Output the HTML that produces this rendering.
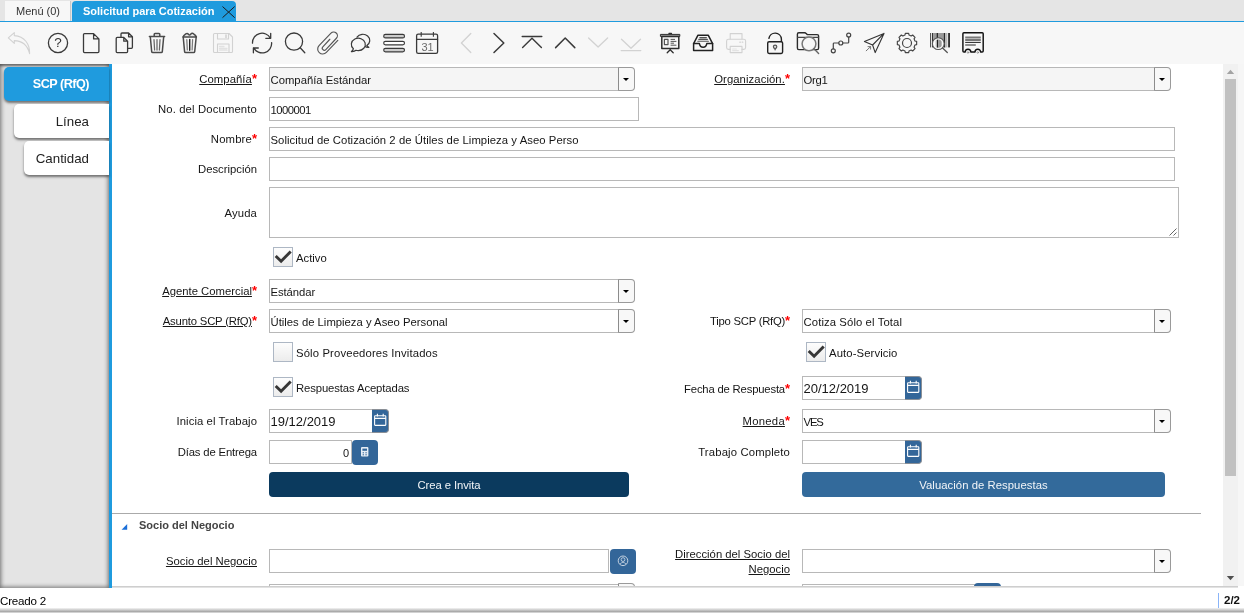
<!DOCTYPE html>
<html lang="es">
<head>
<meta charset="utf-8">
<title>Solicitud para Cotización</title>
<style>
*{box-sizing:border-box;margin:0;padding:0}
html,body{width:1244px;height:613px;overflow:hidden;background:#fff}
body{position:relative;will-change:transform;font-family:"Liberation Sans",sans-serif;font-size:11.3px;color:#161616}
.abs,.lbl,.fld,.txt,.cb,.cbl,.dd,.btn,.ib{position:absolute}
#tabbar{position:absolute;left:0;top:0;width:1244px;height:21px;background:#e5e5e5}
#tabline{position:absolute;left:0;top:21px;width:1244px;height:1px;background:#1f9bde}
#t1{position:absolute;left:5px;top:1px;width:66px;height:20px;background:#f7f7f7;border-right:1px solid #c9c9c9;font-size:11px;line-height:20px;color:#333;padding-left:11px;white-space:nowrap}
#t2{position:absolute;left:72px;top:1px;width:164px;height:21px;background:#1f9bde;border-radius:4px 4px 0 0;font-size:11px;font-weight:bold;line-height:20px;color:#fff;padding-left:11px;white-space:nowrap}
#toolbar{position:absolute;left:0;top:22px;width:1244px;height:42px;background:#f7f7f7}
#side{position:absolute;left:0;top:64px;width:109px;height:524px;background:#e4e4e4;box-shadow:inset 0 0 4px 1px rgba(0,0,0,.5),inset 0 3px 2px -1px rgba(0,0,0,.3)}
#vline{position:absolute;left:109px;top:64px;width:3px;height:524px;background:#1f9bde}
.st{position:absolute;height:34px;border-radius:5px 0 0 5px;font-size:13.3px;line-height:35px;text-align:right;padding-right:20px;white-space:nowrap;box-shadow:0 2px 2.5px rgba(0,0,0,.5)}
.lbl{left:112px;width:145px;height:24px;line-height:24px;text-align:right;white-space:nowrap}
.lbl.r{left:640px;width:150px}
.lbl u{text-decoration:underline;text-underline-offset:1px}
.req{color:#f00;font-weight:bold;font-size:13px;line-height:1px}
.fld{height:24px;border:1px solid #b8b8b8;background:#fff;line-height:22px;padding:1px 0 0 0.5px;white-space:nowrap;overflow:hidden}
.fld.dt{font-size:13px;padding-top:1px}
.fld.ro{background:#f5f5f5}
.dd{width:17px;height:24px;border:1px solid #9a9a9a;border-left-color:#8c8c8c;background:#f8f8f8;border-radius:0 4px 4px 0}
.dd:after{content:"";position:absolute;left:4px;top:10px;border:3.2px solid transparent;border-top:3.6px solid #000;border-bottom:0}
.cb{width:20px;height:20px;border:1px solid #adb7c4;background:linear-gradient(#fdfdfd,#ececec)}
.cbl{height:20px;line-height:20px;white-space:nowrap}
.ib{background:#336699;border-radius:0 3px 3px 0}
.ib.d{border:1px solid #8a8f96;border-left:0;border-radius:0 4px 4px 0}
.btn{height:25px;border-radius:4px;color:#f2f5f8;text-align:center;line-height:27px;white-space:nowrap}
#status{position:absolute;left:0;top:588px;width:1244px;height:25px;background:#fff}
</style>
</head>
<body>
<div id="tabbar"></div>
<div id="t1">Menú (0)</div>
<div id="t2">Solicitud para Cotización</div>
<div id="tabline"></div>
<div id="toolbar"></div>
<svg class="abs" style="left:0;top:0" width="1244" height="64" viewBox="0 0 1244 64" fill="none" stroke="#3a3a3a" stroke-width="1.3" stroke-linecap="round" stroke-linejoin="round">
<path d="M222.8 6.8 L234.4 17.4 M234.4 6.8 L222.8 17.4" stroke="#1c1c1c" stroke-width="1"/>
<path d="M14.3 32.6 L8.3 37.9 L14.3 43.4 L14.3 40.6 C21.5 40.8 27.5 45 29.6 53.6 C29.9 44 24.5 36.2 14.3 35.6 Z" stroke="#d2d2d2" stroke-width="1.1"/>
<circle cx="58" cy="43" r="9.6"/>
<path d="M84.5 33.6 H93.6 L98.9 38.9 V51.5 Q98.9 52.6 97.8 52.6 H84.5 Q83.5 52.6 83.5 51.5 V34.6 Q83.5 33.6 84.5 33.6 Z M93.6 33.6 V38.9 H98.9"/>
<path d="M121 36.8 V34 Q121 33 122 33 H128.6 L132.4 36.8 V47.3 Q132.4 48.3 131.4 48.3 H128.4 M128.6 33 V36.8 H132.4"/>
<path d="M117.2 37.4 H123.8 L127.6 41.2 V51.6 Q127.6 52.6 126.6 52.6 H117.2 Q116.2 52.6 116.2 51.6 V38.4 Q116.2 37.4 117.2 37.4 Z M123.8 37.4 V41.2 H127.6" fill="#f7f7f7"/>
<g stroke="#4a4a4a" stroke-width="1.5"><path d="M149.4 36.4 H164.6 M154.2 36.2 V34.4 Q154.2 33.6 155 33.6 H159 Q159.8 33.6 159.8 34.4 V36.2"/><path d="M150.3 36.8 L151.7 51.6 Q151.8 52.6 152.8 52.6 H161.2 Q162.2 52.6 162.3 51.6 L163.7 36.8"/><path d="M154 39.6 L154.6 50 M157 39.6 V50 M160 39.6 L159.4 50" stroke="#666" stroke-width="1.25"/></g>
<g stroke="#4a4a4a" stroke-width="1.5"><path d="M183.2 37 L184.6 51.6 Q184.7 52.6 185.7 52.6 H193.6 Q194.6 52.6 194.7 51.6 L196.2 37"/><path d="M183 37 Q183.2 35.6 185.8 33.8 Q187.4 32.8 188.6 34.4 Q189.6 35.6 190.6 34.2 Q192.2 32.6 193.6 33.8 Q196 35.4 196.4 37 Z" fill="#e6e6e6"/><path d="M186.8 39.6 L187.3 50 M192.6 39.6 L192.1 50" stroke="#777" stroke-width="1.2"/><path d="M189.7 39.4 V50.2" stroke="#222" stroke-width="1.4"/></g>
<g stroke="#d2d2d2" stroke-width="1.1"><path d="M214.5 33.5 H229 L232.5 37 V51.5 Q232.5 52.5 231.5 52.5 H214.5 Q213.5 52.5 213.5 51.5 V34.5 Q213.5 33.5 214.5 33.5 Z"/><path d="M217.5 33.5 V39 H228.5 V33.5"/><path d="M217.5 52.5 V44 H229 V52.5"/><path d="M226 35 V37.6" stroke-width="1.6"/><path d="M219.5 46.5 H224 M219.5 48.5 H227 M219.5 50.2 H227" stroke="#e2e2e2" stroke-width="1.3"/></g>
<path d="M252.5 43.2 A9.5 9.5 0 0 1 270.4 38.3 M270.7 33.3 V38.3 H265.8"/>
<path d="M271.6 42.6 A9.5 9.5 0 0 1 253.7 47.8 M253.4 52.8 V48 H258.3"/>
<circle cx="294" cy="41.6" r="8.6"/><path d="M300.2 47.8 L304.8 52.8"/>
<g transform="translate(328 43) rotate(43)" stroke="#555" stroke-width="1.15"><path d="M5.4 -8.6 L5.2 8 A5 5 0 0 1 -4.8 8 L-4.5 -9.2 A3.7 3.7 0 0 1 2.9 -9.2 L2.9 6.3 A2.05 2.05 0 0 1 -1.2 6.3 L-1.2 -4"/></g>
<path d="M357 37.2 A6.9 6.1 0 1 1 366.8 45.4 Q367.6 46.8 368.8 47.4 Q366.4 47.6 364.6 46.2" stroke-width="1.2"/>
<path d="M358.2 50.6 A7 6.2 0 1 0 353.4 48.8 Q352.8 50.6 351.4 51.6 Q354.4 51.8 356 50.3 Q357 50.6 358.2 50.6 Z" fill="#f7f7f7" stroke-width="1.2"/>
<g stroke-width="1.15"><rect x="383.7" y="34.4" width="20.8" height="3.5" rx="1.75" fill="#ccc"/><rect x="383.7" y="41.3" width="20.8" height="3.5" rx="1.75" fill="#fff"/><rect x="383.7" y="48.3" width="20.8" height="3.5" rx="1.75" fill="#ccc"/></g>
<rect x="416.6" y="34.2" width="21" height="19.2" rx="1.6"/><path d="M416.6 39.3 H437.6" stroke-width="1.2"/><path d="M421.2 32 V36.8 M433.4 32 V36.8" stroke-width="1.1" stroke-linecap="butt"/>
<path d="M470.8 33.5 L461.4 43 L470.8 52.5" stroke="#d2d2d2"/>
<path d="M494 33.5 L503.8 43 L494 52.5" stroke-width="1.5"/>
<path d="M522.2 36.5 H541.8 M522.6 47.6 L532 38.2 L541.4 47.6" stroke-width="1.4"/>
<path d="M555.6 47.6 L565.2 38 L574.8 47.6" stroke-width="1.5"/>
<path d="M588.6 38 L598.1 47 L607.6 38" stroke="#d2d2d2"/>
<path d="M621.5 39.3 L631 48.3 L640.5 39.3 M621.2 50.6 H640.8" stroke="#d2d2d2"/>
<g stroke="#2e2e2e"><rect x="660.8" y="34.4" width="19" height="2" fill="#aaa" stroke-width="1"/><path d="M669 33.4 H671.4" stroke-width="1.4"/><rect x="661.8" y="36.6" width="17" height="11.8" stroke-width="1.5"/><rect x="664.4" y="39.4" width="3.6" height="5.2" stroke="#555" stroke-width="1.2"/><path d="M671 39.4 H674.6 M671 41.4 H676 M671 43.2 H673.6 M671 45.2 H676" stroke="#555" stroke-width="1"/><path d="M670.2 48.6 V50 M670.2 49.8 L667.2 52.8 M670.2 49.8 L673.2 52.8" stroke-width="1.3"/></g>
<g stroke="#222" stroke-width="1.5"><path d="M693.6 43.6 L698 35.2 H708.2 L712.6 43.6"/><path d="M693.6 43.6 H699.4 Q700 47.2 703.1 47.2 Q706.2 47.2 706.8 43.6 H712.6 V50.4 H693.6 Z"/><path d="M699.8 37.6 H706.4 M698.8 39.4 H707.4 M697.8 41.3 H708.4" stroke="#555" stroke-width="1.1"/></g>
<g stroke="#d2d2d2" stroke-width="1.1"><path d="M730.2 39 V33.6 H742 V39"/><path d="M730.2 49.4 H728.4 Q726.6 49.4 726.6 47.6 V41 Q726.6 39.2 728.4 39.2 H743.8 Q745.6 39.2 745.6 41 V47.6 Q745.6 49.4 743.8 49.4 H742"/><rect x="730.2" y="46.4" width="11.8" height="6.2"/><path d="M732.6 49 H736.4 M732.6 50.6 H738.4" stroke="#e3e3e3"/><path d="M739.8 42.2 H740.4 M742.2 42.2 H742.8" stroke-width="1.2"/></g>
<g stroke="#222" stroke-width="1.4"><rect x="767.7" y="41.7" width="14.9" height="11.8" rx="1.4"/><path d="M768.9 38.4 A6.3 6.3 0 0 1 781.4 39 V41.4"/><circle cx="775.1" cy="46.8" r="1.7" stroke="#555" stroke-width="1.2" fill="#ddd"/><path d="M775.1 48.6 V49.8" stroke="#555" stroke-width="1.4"/></g>
<g stroke="#2c2c2c" stroke-width="1.4"><path d="M798.8 32.8 H804.6 Q805.6 32.8 806.2 33.6 L807.2 34.6 H817.2 Q818.6 34.6 818.6 36 V48 Q818.6 49.6 817.2 49.6 H798.8 Q797.4 49.6 797.4 48 V34.2 Q797.4 32.8 798.8 32.8 Z"/><path d="M797.6 37.4 H818.4" stroke="#444" stroke-width="1.2"/><circle cx="809" cy="43.8" r="6.9" fill="#f7f7f7" stroke="#777" stroke-width="1.5"/><path d="M814 48.8 L818.6 53.4" stroke="#666" stroke-width="1.4"/></g>
<g stroke="#444" stroke-width="1.2"><circle cx="848.7" cy="35.1" r="2"/><circle cx="840.8" cy="43" r="2"/><circle cx="833.3" cy="50.8" r="2"/><path d="M848.7 37.2 V42.2 Q848.7 43 847.9 43 H842.9 M838.7 43 H834.1 Q833.3 43 833.3 43.8 V48.7"/></g>
<g stroke="#333" stroke-width="1.1"><path d="M884 33.4 L864.4 41.4 L872.6 45 L875.2 52.6 Z M872.6 45 L884 33.4"/><path d="M866.2 50.8 L870.6 46.6 M868 46.6 H870.6 V49.2" stroke="#777" stroke-width="1"/></g>
<path d="M904.96 35.06 L905.32 33.35 L908.68 33.35 L909.04 35.06 L911.17 35.94 L912.64 34.98 L915.02 37.36 L914.06 38.83 L914.94 40.96 L916.65 41.32 L916.65 44.68 L914.94 45.04 L914.06 47.17 L915.02 48.64 L912.64 51.02 L911.17 50.06 L909.04 50.94 L908.68 52.65 L905.32 52.65 L904.96 50.94 L902.83 50.06 L901.36 51.02 L898.98 48.64 L899.94 47.17 L899.06 45.04 L897.35 44.68 L897.35 41.32 L899.06 40.96 L899.94 38.83 L898.98 37.36 L901.36 34.98 L902.83 35.94Z" stroke="#444" stroke-width="1.15" stroke-linejoin="round"/>
<circle cx="907" cy="43" r="4.5" stroke="#444" stroke-width="1.2"/>
<g stroke="none"><rect x="930.1" y="33" width=".9" height="14.4" fill="#444"/><rect x="931.9" y="33" width="1.2" height="14.4" fill="#333"/><rect x="933.1" y="33" width="12.1" height="14.4" fill="#9a9a9a"/><rect x="936.7" y="33" width="1.3" height="14.4" fill="#2c2c2c"/><rect x="943.9" y="33" width="1.3" height="14.4" fill="#2c2c2c"/><rect x="945.2" y="33" width="2.2" height="14.4" fill="#bbb"/><rect x="948.1" y="33" width="1.9" height="14.4" fill="#333"/></g>
<circle cx="938.3" cy="43.65" r="5.9" fill="#f7f7f7" stroke="#555" stroke-width="1.1"/><circle cx="938.3" cy="43.65" r="4.3" fill="#fff" stroke="none"/><clipPath id="bcq"><circle cx="938.3" cy="43.65" r="4.2"/></clipPath><g clip-path="url(#bcq)" stroke="none"><rect x="936.5" y="39" width="1.6" height="10" fill="#222"/><rect x="938.1" y="39" width="3.6" height="10" fill="#9a9a9a"/><rect x="935.2" y="39" width="1.3" height="10" fill="#ddd"/></g><path d="M942.6 48 L947.3 52.5" stroke="#555" stroke-width="1.3"/>
<g stroke="#111" stroke-width="1.45"><path d="M962.9 51 V33.8 Q962.9 32.8 963.9 32.8 H982.2 Q983.2 32.8 983.2 33.8 V51 Q983.2 52 982.2 52 H980.6 A2.8 2.8 0 0 0 975 52 H970.8 A2.8 2.8 0 0 0 965.2 52 H963.9 Q962.9 52 962.9 51 Z"/><path d="M965.2 37.5 H980.8 M965.2 40 H980.8" stroke="#777" stroke-width="2" stroke-linecap="butt"/><path d="M965.2 42.4 H980.8" stroke="#222" stroke-width="1" stroke-linecap="butt"/><path d="M965.2 45 H975.8" stroke="#555" stroke-width="1.3" stroke-linecap="butt"/><circle cx="968" cy="52.5" r=".8" stroke="#888" stroke-width=".8"/><circle cx="977.8" cy="52.5" r=".8" stroke="#888" stroke-width=".8"/></g>
</svg>
<div class="abs" style="left:48px;top:33px;width:20px;height:20px;line-height:20px;text-align:center;font-size:13.5px;color:#333">?</div>
<div class="abs" style="left:417px;top:41px;width:21px;height:12px;line-height:12px;text-align:center;font-size:11px;color:#6a6a6a">31</div>
<div id="side"></div>
<div id="vline"></div>
<div class="st" style="left:4px;top:67px;width:105px;background:#1f9bde;color:#fff;font-weight:bold;font-size:12.6px;letter-spacing:-.5px">SCP (RfQ)</div>
<div class="st" style="left:14px;top:104px;width:95px;background:#fff;color:#222">Línea</div>
<div class="st" style="left:24px;top:141px;width:85px;background:#fff;color:#222">Cantidad</div>

<!-- row 1 -->
<div class="lbl" style="top:67px"><u style="letter-spacing:0.07px">Compañía</u><span class="req">*</span></div>
<div class="fld ro" style="left:269px;top:67px;width:350px">Compañía Estándar</div><div class="dd" style="left:618px;top:67px"></div>
<div class="lbl r" style="top:67px"><u style="letter-spacing:0.08px">Organización.</u><span class="req">*</span></div>
<div class="fld ro" style="left:802px;top:67px;width:353px;letter-spacing:-.3px">Org1</div><div class="dd" style="left:1154px;top:67px"></div>
<!-- row 2 -->
<div class="lbl" style="top:97px"><span style="letter-spacing:0.14px">No. del Documento</span></div>
<div class="fld" style="left:269px;top:97px;width:370px;letter-spacing:-.55px">1000001</div>
<!-- row 3 -->
<div class="lbl" style="top:127px"><span style="letter-spacing:0.15px">Nombre</span><span class="req">*</span></div>
<div class="fld" style="left:269px;top:127px;width:906px"><span style="letter-spacing:0.06px">Solicitud de Cotización 2 de Útiles de Limpieza y Aseo Perso</span></div>
<!-- row 4 -->
<div class="lbl" style="top:157px">Descripción</div>
<div class="fld" style="left:269px;top:157px;width:906px"></div>
<!-- row 5 -->
<div class="lbl" style="top:201px"><span style="letter-spacing:0.11px">Ayuda</span></div>
<div class="fld" style="left:269px;top:187px;width:910px;height:51px"></div>
<svg class="abs" style="left:1166px;top:225px" width="12" height="12" viewBox="0 0 12 12"><path d="M3.5 10.5 L10.5 3.5 M7.5 10.5 L10.5 7.5" stroke="#666" stroke-width="1" fill="none"/></svg>
<!-- activo -->
<div class="cb" style="left:273px;top:247px"></div>
<div class="cbl" style="left:296px;top:248px">Activo</div>
<!-- agente -->
<div class="lbl" style="top:279px"><u>Agente Comercial</u><span class="req">*</span></div>
<div class="fld" style="left:269px;top:279px;width:350px"><span style="letter-spacing:-0.08px">Estándar</span></div><div class="dd" style="left:618px;top:279px"></div>
<!-- asunto -->
<div class="lbl" style="top:309px"><u style="letter-spacing:-0.18px">Asunto SCP (RfQ)</u><span class="req">*</span></div>
<div class="fld" style="left:269px;top:309px;width:350px">Útiles de Limpieza y Aseo Personal</div><div class="dd" style="left:618px;top:309px"></div>
<div class="lbl r" style="top:309px"><span style="letter-spacing:-0.26px">Tipo SCP (RfQ)</span><span class="req">*</span></div>
<div class="fld" style="left:802px;top:309px;width:353px"><span style="letter-spacing:0.1px">Cotiza Sólo el Total</span></div><div class="dd" style="left:1154px;top:309px"></div>
<!-- solo proveedores -->
<div class="cb" style="left:273px;top:342px"></div>
<div class="cbl" style="left:296px;top:343px"><span style="letter-spacing:0.14px">Sólo Proveedores Invitados</span></div>
<div class="cb" style="left:806px;top:342px"></div>
<div class="cbl" style="left:829px;top:343px"><span style="letter-spacing:0.1px">Auto-Servicio</span></div>
<!-- respuestas -->
<div class="cb" style="left:273px;top:377px"></div>
<div class="cbl" style="left:296px;top:378px"><span style="letter-spacing:-0.11px">Respuestas Aceptadas</span></div>
<div class="lbl r" style="top:377px"><span style="letter-spacing:-0.19px">Fecha de Respuesta</span><span class="req">*</span></div>
<div class="fld dt" style="left:802px;top:376px;width:104px">20/12/2019</div><div class="ib d" style="left:905px;top:376px;width:17px;height:24px"></div>
<!-- inicia -->
<div class="lbl" style="top:409px"><span style="letter-spacing:0.08px">Inicia el Trabajo</span></div>
<div class="fld dt" style="left:269px;top:409px;width:104px">19/12/2019</div><div class="ib d" style="left:372px;top:409px;width:17px;height:24px"></div>
<div class="lbl r" style="top:409px"><u style="letter-spacing:0.25px">Moneda</u><span class="req">*</span></div>
<div class="fld" style="left:802px;top:409px;width:353px;letter-spacing:-1.1px">VES</div><div class="dd" style="left:1154px;top:409px"></div>
<!-- dias -->
<div class="lbl" style="top:440px"><span style="letter-spacing:-0.16px">Días de Entrega</span></div>
<div class="fld" style="left:269px;top:440px;width:83px;text-align:right;padding-right:2px;font-size:11px">0</div><div class="ib" style="left:352px;top:440px;width:26px;height:25px;border-radius:4px"></div>
<div class="lbl r" style="top:440px"><span style="letter-spacing:0.15px">Trabajo Completo</span></div>
<div class="fld dt" style="left:802px;top:440px;width:104px"></div><div class="ib d" style="left:905px;top:440px;width:17px;height:24px"></div>
<!-- buttons -->
<div class="btn" style="left:269px;top:472px;width:360px;background:#0b3a5e"><span style="letter-spacing:-0.07px">Crea e Invita</span></div>
<div class="btn" style="left:802px;top:472px;width:363px;background:#336a9b"><span style="letter-spacing:0.05px">Valuación de Respuestas</span></div>
<!-- separator + group -->
<div class="abs" style="left:112px;top:513px;width:1089px;height:1px;background:#aaa"></div>
<svg class="abs" style="left:121px;top:523px" width="8" height="8" viewBox="0 0 8 8"><path d="M6.2 1 V6.8 H0.6 Z" fill="#1b6fd8"/></svg>
<div class="abs" style="left:139px;top:518px;font-size:11px;font-weight:bold;color:#444;line-height:14px;white-space:nowrap">Socio del Negocio</div>
<div class="lbl" style="top:549px"><u>Socio del Negocio</u></div>
<div class="fld" style="left:269px;top:549px;width:340px"></div><div class="ib" style="left:610px;top:549px;width:26px;height:25px;border-radius:4px"></div>
<div class="lbl r" style="top:547px;height:30px;line-height:15px;white-space:normal;left:660px;width:130px"><u>Dirección del Socio del Negocio</u></div>
<div class="fld" style="left:802px;top:549px;width:353px"></div><div class="dd" style="left:1154px;top:549px"></div>
<!-- partially visible next row -->
<div class="fld" style="left:269px;top:584px;width:350px"></div><div class="dd" style="left:618px;top:583px"></div>
<div class="fld" style="left:802px;top:584px;width:173px"></div><div class="ib" style="left:974px;top:583px;width:27px;height:25px;border-radius:4px"></div>

<!-- icons inside widgets (checkmarks, calendars, etc.) -->
<svg class="abs" style="left:0;top:0;pointer-events:none" width="1244" height="613" viewBox="0 0 1244 613" fill="none">
<g stroke="#363636" stroke-width="2.9" stroke-linejoin="miter">
<path d="M275.7 256.0 L281.1 261.3 L290.7 251.5"/>
<path d="M275.7 386.0 L281.1 391.3 L290.7 381.5"/>
<path d="M808.7 351.0 L814.1 356.3 L823.7 346.5"/>
</g>
<g stroke="#fff" stroke-width="1.1">
<rect x="374.6" y="415.8" width="11.2" height="9.6" rx=".6"/><path d="M374.6 418.4 H385.8 M377.4 413.8 V416.4 M383.2 413.8 V416.4"/>
<rect x="907.6" y="382.8" width="11.2" height="9.6" rx=".6"/><path d="M907.6 385.4 H918.8 M910.4 380.8 V383.4 M916.2 380.8 V383.4"/>
<rect x="907.6" y="446.8" width="11.2" height="9.6" rx=".6"/><path d="M907.6 449.4 H918.8 M910.4 444.8 V447.4 M916.2 444.8 V447.4"/>
</g>
<g>
<rect x="361" y="447" width="7.4" height="9.6" rx="1" fill="#e6edf5"/><rect x="362.4" y="448.6" width="4.6" height="2.2" fill="#336699"/><path d="M362.6 452.8 H364 M365.4 452.8 H366.8 M362.6 454.8 H364 M365.4 454.8 H366.8" stroke="#336699" stroke-width="1"/>
<circle cx="623" cy="560.8" r="4.8" stroke="#c3d1e0" stroke-width="1"/><circle cx="623" cy="559.6" r="1.9" stroke="#c3d1e0" stroke-width=".9"/><path d="M620 564.2 Q623 560.2 626 564.2" stroke="#c3d1e0" stroke-width=".9"/>
</g>
</svg>

<!-- scrollbar -->
<div class="abs" style="left:1223px;top:64px;width:15px;height:522px;background:#f1f1f1"></div>
<div class="abs" style="left:1238px;top:64px;width:6px;height:522px;background:#f6f6f6"></div>
<div class="abs" style="left:1225px;top:79px;width:11px;height:397px;background:#c1c1c1"></div>
<svg class="abs" style="left:1223px;top:64px" width="15" height="522" viewBox="0 0 15 522"><path d="M3.8 10 L7.5 5.8 L11.2 10 Z" fill="#a3a3a3"/><path d="M3.8 512 L7.5 516.2 L11.2 512 Z" fill="#505050"/></svg>

<!-- status bar -->
<div id="status"></div>
<div class="abs" style="left:112px;top:586px;width:1126px;height:2px;background:linear-gradient(#c4c4c4,#ececec)"></div>
<div class="abs" style="left:0;top:608px;width:1244px;height:4px;background:linear-gradient(#f4f4f4,#a0a0a0)"></div>
<div class="abs" style="left:0;top:612px;width:1244px;height:1px;background:#d2d2d2"></div>
<div class="abs" style="left:0;top:593px;font-size:11.6px;line-height:16px;color:#000;white-space:nowrap;letter-spacing:-.2px">Creado 2</div>
<div class="abs" style="left:1218px;top:593px;width:1px;height:15px;background:#8ab4f8"></div>
<div class="abs" style="left:1224px;top:592px;font-size:11.5px;font-weight:bold;line-height:16px;color:#111;white-space:nowrap;">2/2</div>
</body>
</html>
